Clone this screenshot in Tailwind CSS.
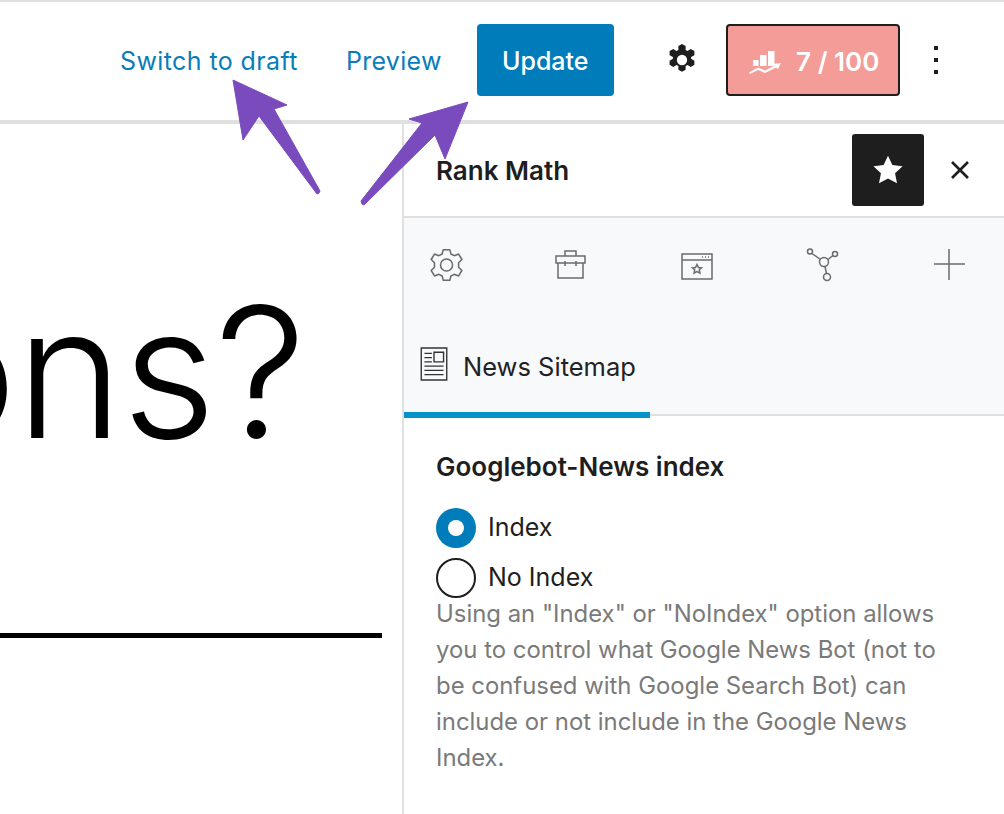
<!DOCTYPE html>
<html lang="en">
<head>
    <meta charset="UTF-8">
    <title>Rank Math News Sitemap</title>
    <script src="https://cdn.jsdelivr.net/npm/@tailwindcss/browser@4"></script>
</head>
<body class="bg-white font-['Inter',sans-serif] text-[#1e1e1e] overflow-hidden">
    <div class="relative w-[1004px] h-[814px] overflow-hidden">
        <!-- Top bar -->
        <header class="h-[124px] border-t-2 border-b-4 border-[#e0e0e0] flex items-center pb-[2px]">
            <a class="ml-[120px] pt-[4px] text-[25px] tracking-[0.4px] text-[#0a7db8]">Switch to draft</a>
            <a class="ml-[48px] pt-[4px] text-[25px] tracking-[0.3px] text-[#0a7db8]">Preview</a>
            <button class="ml-[35px] w-[137px] h-[72px] pt-[3px] rounded-[4px] bg-[#007cba] text-white text-[25px] font-medium">Update</button>
            <svg class="ml-[53px] w-[30px] h-[32px]" viewBox="3.500 0.500 25 31" fill="#1e1e1e">
                <path fill-rule="evenodd" d="M16 .5l3.500 2v3.700l1.800 1 3.200-1.900 3.500 2v4l-3.200 1.800v1.800l3.200 1.800v4l-3.500 2-3.200-1.900-1.800 1v3.700l-3.500 2-3.500-2v-3.700l-1.800-1-3.200 1.900-3.500-2v-4l3.200-1.800v-1.800l-3.200-1.800v-4l3.500-2 3.200 1.900 1.800-1V2.500z M16 11a5 5 0 1 0 0 10 5 5 0 0 0 0-10z"/>
            </svg>
            <button class="ml-[29px] w-[174px] h-[72px] pt-[2px] pl-[2px] rounded-[4px] border-2 border-[#1e1e1e] bg-[#f39c98] text-white text-[26px] font-semibold flex items-center justify-center gap-[14px]">
                <svg class="w-[34px] h-[26px]" viewBox="0 0 34 26" fill="#fff">
                    <rect x="5" y="12" width="5.500" height="6"/><rect x="12" y="7" width="6.500" height="11"/><rect x="20" y="3" width="6.500" height="15"/>
                    <path d="M1 24.500l9-5 7 3 10-5-2-1.500 8-1-3 6-2-1.500-11 5.500-7-3-8 4z"/>
                </svg>
                <span>7 / 100</span>
            </button>
            <div class="ml-[34px] flex flex-col gap-[8px]">
                <span class="w-[4px] h-[4px] bg-[#1e1e1e]"></span>
                <span class="w-[4px] h-[4px] bg-[#1e1e1e]"></span>
                <span class="w-[4px] h-[4px] bg-[#1e1e1e]"></span>
            </div>
        </header>

        <div class="flex h-[690px]">
            <!-- Editor canvas -->
            <main class="w-[402px] shrink-0 relative overflow-hidden">
                <div class="absolute right-[97px] top-[157px] text-[182px] leading-none font-[350] tracking-[-1px] text-black whitespace-nowrap">ons?</div>
                <div class="absolute left-0 top-[509px] w-[382px] h-[5px] bg-black"></div>
            </main>

            <!-- Sidebar -->
            <aside class="w-[602px] border-l-2 border-[#e0e0e0]">
                <div class="h-[94px] flex items-center pl-[32px] border-b-2 border-[#e0e0e0]">
                    <h2 class="text-[26px] pt-[1px] font-semibold">Rank Math</h2>
                    <button class="ml-auto w-[72px] h-[72px] rounded-[3px] bg-[#1e1e1e] flex items-center justify-center">
                        <svg class="w-[36px] h-[36px]" viewBox="0 0 24 24" fill="#fff"><path d="M12 2.500l2.900 6.200 6.800.8-5 4.700 1.300 6.700L12 17.600 6 20.900l1.300-6.700-5-4.700 6.800-.8z"/></svg>
                    </button>
                    <svg class="ml-[26px] mr-[34px] w-[20px] h-[20px]" viewBox="0 0 20 20" stroke="#1e1e1e" stroke-width="2.600" fill="none"><path d="M2 2l16 16M18 2L2 18"/></svg>
                </div>
                <div class="bg-[#f8f9fb] h-[198px] relative border-b-2 border-[#e0e0e0]">
                    <div class="flex h-[98px] items-start pt-[30px] pl-[24.500px] gap-[92.500px] text-[#6b6b6b]">
                        <svg class="w-[34px] h-[34px]" viewBox="1 1.500 31 31" fill="none" stroke="currentColor" stroke-width="1.400"><circle cx="17" cy="17" r="5.500"/><path d="M14 3h6l1 4 3 1.500 4-1.500 3 5-3 3v4l3 3-3 5-4-1.500-3 1.500-1 4h-6l-1-4-3-1.500-4 1.500-3-5 3-3v-4l-3-3 3-5 4 1.500 3-1.500z" stroke-linejoin="round"/></svg>
                        <svg class="w-[32px] h-[32px]" viewBox="0 0 32 32" fill="none" stroke="currentColor" stroke-width="1.500"><path d="M1 8h29v7H1zM3 15v15h25V15M10 8V3h11v5M10 13v5M21 13v5"/></svg>
                        <svg class="w-[34px] h-[34px]" viewBox="0 0 34 34" fill="none" stroke="currentColor" stroke-width="1.500"><path d="M2 6h30v25H2zM2 12h30M22 9h1M25 9h1M28 9h1"/><path d="M17 16.500l1.500 3 3 .4-2.200 2.100.6 3.100-2.900-1.500-2.900 1.500.6-3.100-2.200-2.100 3-.4z"/></svg>
                        <svg class="w-[34px] h-[34px]" viewBox="0 0 34 34" fill="none" stroke="currentColor" stroke-width="1.500"><circle cx="18" cy="14" r="4.500"/><circle cx="4" cy="3.500" r="2.500"/><circle cx="29" cy="6" r="2.500"/><circle cx="21" cy="29" r="3.500"/><path d="M6 5.500l8.500 6M22 11.500l5-4M19 18.500l1.500 7"/></svg>
                        <svg class="w-[32px] h-[32px]" viewBox="0 0 32 32" fill="none" stroke="currentColor" stroke-width="1.500"><path d="M16 1v31M1 16h31"/></svg>
                    </div>
                    <div class="flex items-center pl-[16px] h-[96px] gap-[15px]">
                        <svg class="w-[28px] h-[34px]" viewBox="0 0 26 32" fill="none" stroke="#333" stroke-width="1.300"><path d="M1 1h24v30H1zM4 6h7M4 10h7M4 14h7M13 5h9v9h-9zM4 18h18M4 22h18M4 26h18"/></svg>
                        <span class="text-[25.500px] pt-[7px] text-[#222]">News Sitemap</span>
                    </div>
                    <div class="absolute left-0 bottom-[-4px] w-[246px] h-[6px] bg-[#0693c9]"></div>
                </div>
                <div class="pl-[32px] pr-[50px] pt-[36px]">
                    <h3 class="text-[26px] font-semibold leading-[30px]">Googlebot-News index</h3>
                    <div class="mt-[26px] flex items-center gap-[12px] h-[40px]">
                        <span class="w-[40px] h-[40px] rounded-full bg-[#007cba] flex items-center justify-center"><span class="w-[16px] h-[16px] rounded-full bg-white"></span></span>
                        <span class="text-[25px]">Index</span>
                    </div>
                    <div class="mt-[10px] flex items-center gap-[12px] h-[40px]">
                        <span class="w-[40px] h-[40px] rounded-full border-2 border-[#1e1e1e]"></span>
                        <span class="text-[25px]">No Index</span>
                    </div>
                    <p class="text-[23.900px] leading-[36px] text-[#7a7a7a] -mt-[2px]">Using an "Index" or "NoIndex" option allows you to control what Google News Bot (not to be confused with Google Search Bot) can include or not include in the Google News Index.</p>
                </div>
            </aside>
        </div>

        <!-- Annotation arrows -->
        <svg class="absolute left-0 top-0 w-[1004px] h-[814px] pointer-events-none" viewBox="0 0 1004 814">
            <path d="M233 80l54 25-13 4 46 82-1 2-2 1-58-78-16 24z" fill="#7a4bbd" stroke="#7a4bbd" stroke-linejoin="round"/>
            <path d="M468 102l-23 57-10-24-71 70-2-1-1-3 61-78-13-4z" fill="#7a4bbd" stroke="#7a4bbd" stroke-linejoin="round"/>
        </svg>
    </div>
</body>
</html>
